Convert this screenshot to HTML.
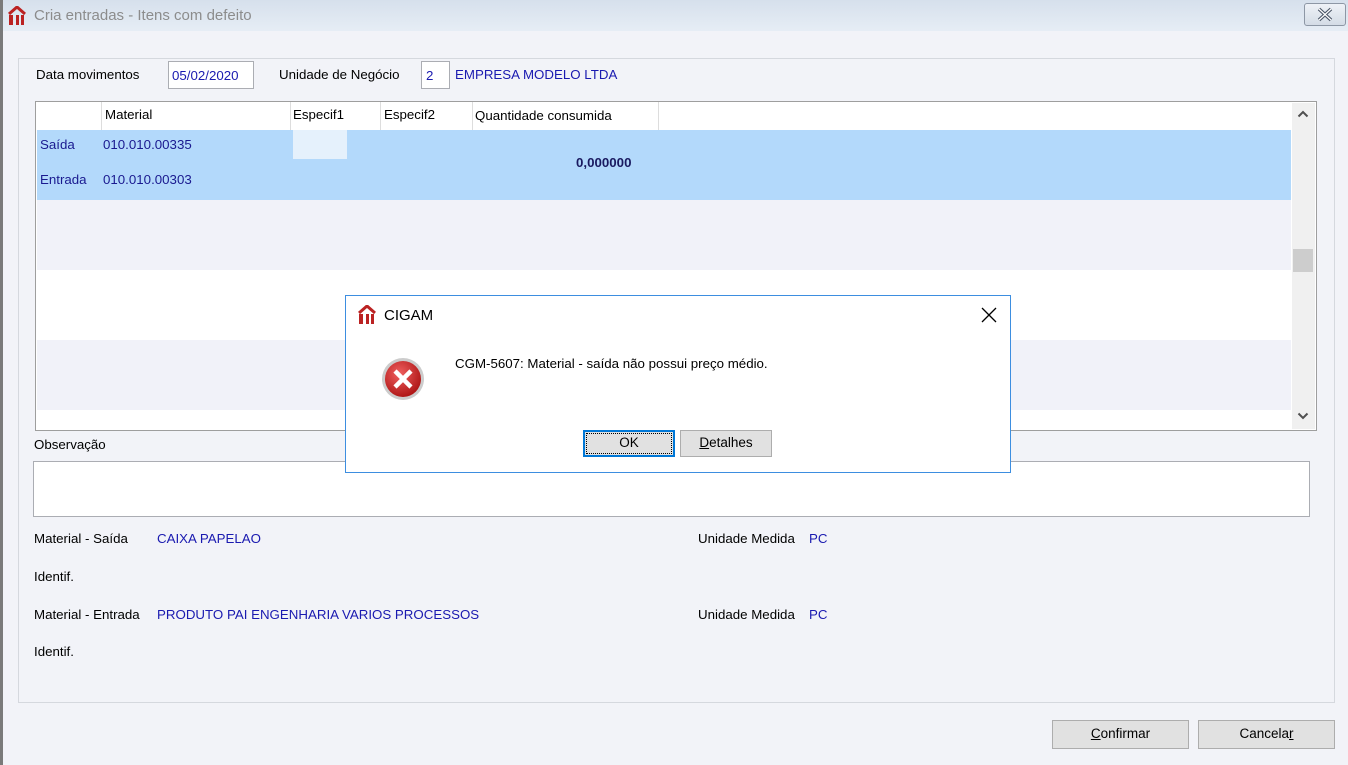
<!DOCTYPE html>
<html><head><meta charset="utf-8"><style>
*{margin:0;padding:0;box-sizing:border-box}
body{width:1348px;height:765px;background:#f2f3f8;font-family:"Liberation Sans",sans-serif;font-size:13.3px;color:#000;position:relative;overflow:hidden}
.a{position:absolute;white-space:nowrap}
.blue{color:#1a1ab0}
.btn{position:absolute;background:#e1e1e1;border:1px solid #adadad;text-align:center;line-height:26px;font-size:13.5px}
</style></head><body>
<div class="a" style="left:0;top:0;width:3px;height:765px;background:#7a7a7a"></div>
<div class="a" style="left:3px;top:0;width:1345px;height:31px;background:linear-gradient(#d6e0ec,#e6edf5)"></div>
<svg class="a" style="left:7px;top:6px" width="20" height="20" viewBox="0 0 20 20"><path d="M2 8 L10 1 L18 8" stroke="#b22" stroke-width="3" fill="none"/><rect x="2" y="9" width="4" height="10" fill="#b22"/><rect x="9" y="9" width="3" height="10" fill="#b22"/><rect x="14" y="9" width="3" height="10" fill="#b22"/></svg>
<div class="a" style="left:34px;top:7px;font-size:15px;color:#8c8c8c">Cria entradas - Itens com defeito</div>
<div class="a" style="left:1304px;top:3px;width:42px;height:23px;border:1px solid #8d97a5;border-radius:3px;background:linear-gradient(#eef2f7,#d4dce6)"><svg width="40" height="21"><path d="M14 5L26 16M26 5L14 16" stroke="#4a5566" stroke-width="3.5"/><path d="M14 5L26 16M26 5L14 16" stroke="#fff" stroke-width="1.2"/></svg></div>

<div class="a" style="left:18px;top:58px;width:1317px;height:645px;border:1px solid #d5d8de"></div>
<div class="a" style="left:36px;top:67px">Data movimentos</div>
<div class="a" style="left:168px;top:61px;width:86px;height:28px;background:#fff;border:1px solid #abadb3;padding:6px 0 0 3px" ><span class="blue">05/02/2020</span></div>
<div class="a" style="left:279px;top:67px">Unidade de Negócio</div>
<div class="a" style="left:421px;top:61px;width:29px;height:28px;background:#fff;border:1px solid #abadb3;padding:6px 0 0 4px"><span class="blue">2</span></div>
<div class="a blue" style="left:455px;top:67px">EMPRESA MODELO LTDA</div>

<div class="a" style="left:35px;top:101px;width:1282px;height:330px;border:1px solid #9e9e9e;background:#fff"></div>
<div class="a" style="left:101px;top:102px;width:1px;height:28px;background:#ddd"></div>
<div class="a" style="left:290px;top:102px;width:1px;height:28px;background:#ddd"></div>
<div class="a" style="left:380px;top:102px;width:1px;height:28px;background:#ddd"></div>
<div class="a" style="left:472px;top:102px;width:1px;height:28px;background:#ddd"></div>
<div class="a" style="left:658px;top:102px;width:1px;height:28px;background:#ddd"></div>
<div class="a" style="left:105px;top:107px">Material</div>
<div class="a" style="left:293px;top:107px">Especif1</div>
<div class="a" style="left:384px;top:107px">Especif2</div>
<div class="a" style="left:475px;top:108px">Quantidade consumida</div>
<div class="a" style="left:37px;top:130px;width:1254px;height:70px;background:#b3d9fb"></div>
<div class="a" style="left:293px;top:130px;width:54px;height:29px;background:#e5f1fc"></div>
<div class="a" style="left:37px;top:200px;width:1254px;height:70px;background:#f1f2f9"></div>
<div class="a" style="left:37px;top:340px;width:1254px;height:70px;background:#f1f2f9"></div>
<div class="a" style="left:40px;top:137px;color:#1a1a90">Saída</div>
<div class="a" style="left:103px;top:137px;color:#1a1a90">010.010.00335</div>
<div class="a" style="left:40px;top:172px;color:#1a1a90">Entrada</div>
<div class="a" style="left:103px;top:172px;color:#1a1a90">010.010.00303</div>
<div class="a" style="left:576px;top:155px;font-weight:bold;color:#1a1a60">0,000000</div>
<div class="a" style="left:1292px;top:103px;width:23px;height:326px;background:#f0f0f0"></div>
<div class="a" style="left:1293px;top:249px;width:20px;height:23px;background:#cdcdcd"></div>
<svg class="a" style="left:1297px;top:110px" width="12" height="8"><path d="M1.5 6.5L6 2L10.5 6.5" stroke="#505050" stroke-width="2" fill="none"/></svg>
<svg class="a" style="left:1297px;top:412px" width="12" height="8"><path d="M1.5 1.5L6 6L10.5 1.5" stroke="#505050" stroke-width="2" fill="none"/></svg>

<div class="a" style="left:34px;top:437px">Observação</div>
<div class="a" style="left:33px;top:461px;width:1277px;height:56px;background:#fff;border:1px solid #abadb3"></div>
<div class="a" style="left:34px;top:531px">Material - Saída</div>
<div class="a blue" style="left:157px;top:531px">CAIXA PAPELAO</div>
<div class="a" style="left:34px;top:569px">Identif.</div>
<div class="a" style="left:34px;top:607px">Material - Entrada</div>
<div class="a blue" style="left:157px;top:607px">PRODUTO PAI ENGENHARIA VARIOS PROCESSOS</div>
<div class="a" style="left:34px;top:644px">Identif.</div>
<div class="a" style="left:698px;top:531px">Unidade Medida</div>
<div class="a blue" style="left:809px;top:531px">PC</div>
<div class="a" style="left:698px;top:607px">Unidade Medida</div>
<div class="a blue" style="left:809px;top:607px">PC</div>

<div class="btn" style="left:1052px;top:720px;width:137px;height:29px"><u>C</u>onfirmar</div>
<div class="btn" style="left:1198px;top:720px;width:137px;height:29px">Cancela<u>r</u></div>

<div class="a" style="left:345px;top:295px;width:666px;height:178px;background:#fff;border:1px solid #3d8ee0"></div>
<svg class="a" style="left:357px;top:305px" width="20" height="20" viewBox="0 0 20 20"><path d="M2 8 L10 1 L18 8" stroke="#b22" stroke-width="3" fill="none"/><rect x="2" y="9" width="4" height="10" fill="#b22"/><rect x="9" y="9" width="3" height="10" fill="#b22"/><rect x="14" y="9" width="3" height="10" fill="#b22"/></svg>
<div class="a" style="left:384px;top:307px;font-size:15px">CIGAM</div>
<svg class="a" style="left:981px;top:307px" width="16" height="16"><path d="M1 1L15 15M15 1L1 15" stroke="#000" stroke-width="1.3"/></svg>
<svg class="a" style="left:380px;top:356px" width="46" height="46" viewBox="0 0 46 46"><defs><radialGradient id="g" cx="40%" cy="35%" r="65%"><stop offset="0" stop-color="#f06060"/><stop offset="1" stop-color="#b01818"/></radialGradient></defs><circle cx="23" cy="23" r="21" fill="#ccc"/><circle cx="23" cy="23" r="18" fill="url(#g)"/><path d="M15 15L31 31M31 15L15 31" stroke="#fff" stroke-width="4.5"/></svg>
<div class="a" style="left:455px;top:356px">CGM-5607: Material - saída não possui preço médio.</div>
<div class="btn" style="left:583px;top:430px;width:92px;height:27px;border:2px solid #0078d7;line-height:22px;outline:1px dotted #000;outline-offset:-4px">OK</div>
<div class="btn" style="left:680px;top:430px;width:92px;height:27px;line-height:24px"><u>D</u>etalhes</div>
</body></html>
